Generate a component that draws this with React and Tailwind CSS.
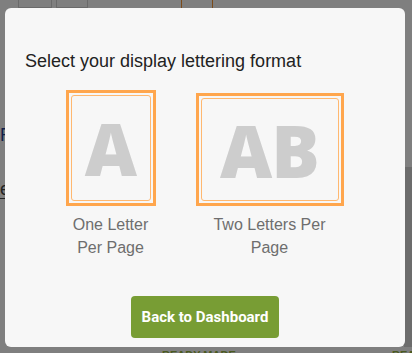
export default function App() {
  const options = [
    { key: 'one', letters: 'A', label: ['One Letter', 'Per Page'], box: 'w-[90px] h-[116px]', mt: 'mt-0' },
    { key: 'two', letters: 'AB', label: ['Two Letters Per', 'Page'], box: 'w-[148px] h-[113px]', mt: 'mt-[3px]' },
  ];

  return (
    <div className="relative w-[412px] h-[353px] overflow-hidden bg-[#7f7f7f] font-['Liberation_Sans',Arial,sans-serif]">
      {/* dimmed page behind the dialog */}
      <div className="flex gap-[4px] pl-[18px]">
        <div className="w-[34px] h-[8px] border border-[#6a6a6a] border-t-0" />
        <div className="w-[32px] h-[8px] border border-[#6a6a6a] border-t-0" />
        <div className="ml-[89px] w-[32px] h-[8px] border-x border-[#7a4a1a]" />
      </div>
      <div className="absolute left-0 top-[126px] text-[18px] text-[#10204a] leading-none">R</div>
      <div className="absolute left-0 top-[180px] text-[18px] text-[#222] leading-none border-b border-[#222] w-[6px] overflow-hidden">e</div>
      <div className="absolute right-0 top-[167px] w-[8px] h-[180px] bg-[#6c6c6c]" />
      <div className="absolute left-[162px] top-[347px] text-[11px] font-bold text-[#4a5a20]">READY MADE</div>
      <div className="absolute left-[392px] top-[347px] text-[11px] font-bold text-[#4a5a20]">REA</div>

      <div className="absolute left-[5px] top-[8px] w-[400px] h-[339px] rounded-[6px] bg-[#f7f7f7] flex flex-col">
        <h2 className="mt-[41px] ml-[20px] text-[18px] leading-[24px] text-[#222]">
          Select your display lettering format
        </h2>
        <div className="flex justify-center items-start gap-[40px] mt-[17px] ml-[-1px]">
          {options.map((o) => (
            <div key={o.key} className={`flex flex-col items-center ${o.mt}`}>
              <div className={`${o.box} border-[3px] border-[#ffa64d] p-[2px]`}>
                <div className="w-full h-full rounded-[3px] border border-[#ffb870] flex items-center justify-center">
                  <span className="font-['Open_Sans',sans-serif] font-extrabold text-[72px] leading-none text-[#cdcdcd] tracking-[-1px]">
                    {o.letters}
                  </span>
                </div>
              </div>
              <div className="mt-[7px] text-center text-[16px] leading-[23px] text-[#6e6e6e]">
                {o.label.map((l) => (
                  <div key={l}>{l}</div>
                ))}
              </div>
            </div>
          ))}
        </div>
        <div className="flex justify-center mt-auto mb-[9px]">
          <button className="w-[148px] h-[42px] rounded-[4px] bg-[#789d34] text-white text-[15px] font-bold font-['Roboto',sans-serif]">
            Back to Dashboard
          </button>
        </div>
      </div>
    </div>
  );
}
